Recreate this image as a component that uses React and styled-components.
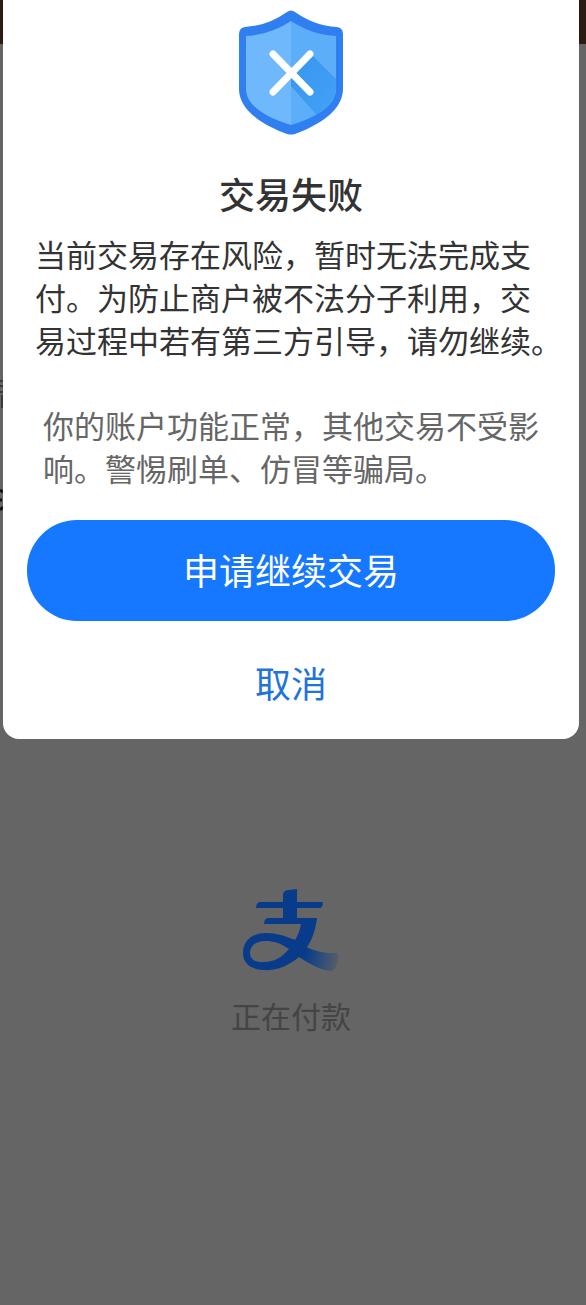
import React from "react";
import styled, { createGlobalStyle } from "styled-components";

const GlobalStyle = createGlobalStyle`
    * {
        box-sizing: border-box;
    }

    body {
        margin: 0;
        background: #656565;
        font-family: "Noto Sans CJK SC", sans-serif;
    }
`;

const ShieldIcon = () => (
    <Shield viewBox="0 0 104 126" aria-hidden="true">
        <defs>
            <linearGradient id="shieldShadow" x1="0" y1="0" x2="1" y2="1">
                <stop offset="0" stopColor="#3795ee" />
                <stop offset="1" stopColor="#46a5f8" />
            </linearGradient>
            <clipPath id="shieldInner">
                <path d="M52 11C66 20 80 25 97 26V80C96 97 75 108 52 115C29 108 8 97 7 80V26C24 25 38 20 52 11Z" />
            </clipPath>
        </defs>
        <path
            d="M48 2Q52 -1 56 2C69 11 82 16 98 17Q104 18 104 24V80C103 101 80 115 56 124Q52 125 48 124C24 115 1 101 0 80V24Q0 18 6 17C22 16 35 11 48 2Z"
            fill="#2f7ff0"
        />
        <g clipPath="url(#shieldInner)">
            <path d="M0 0H52V126H0Z" fill="#70b8fc" />
            <path d="M52 0H104V126H52Z" fill="#5caef8" />
            <path d="M74 46L104 76V126H96L52 76V64Z" fill="url(#shieldShadow)" />
        </g>
        <path
            d="M34 44L71 82M71 44L34 82"
            fill="none"
            stroke="#fff"
            strokeWidth="7"
            strokeLinecap="round"
        />
    </Shield>
);

const PayLogo = () => (
    <Logo viewBox="0 0 96 82" aria-hidden="true">
        <defs>
            <linearGradient id="logoTail" gradientUnits="userSpaceOnUse" x1="62" y1="66" x2="98" y2="72">
                <stop offset="0" stopColor="#083c8a" />
                <stop offset="1" stopColor="#083c8a" stopOpacity="0.1" />
            </linearGradient>
        </defs>
        <g fill="#083c8a">
            <path d="M16 13H80Q80 17 78 19H13Q13 15 16 13Z" />
            <path d="M24 29H74L72 35H21Q21 31 24 29Z" />
            <path d="M40 5Q41 1 46 1L54 0V35H40Z" />
            <path
                d="M58 29H74C72 45 67 57 56 68C45 77 33 82 20 81C7 80 0 74 0 64C0 52 9 44 23 44C34 44 42 47 52 51C55 46 57 41 58 35ZM46 60C37 54 31 52 22 52C13 52 7 57 7 64C7 70 12 74 21 73C32 73 39 68 46 60Z"
                fillRule="evenodd"
            />
        </g>
        <path
            d="M50 50C64 60 78 65 93 64Q97 65 95 73Q93 80 88 82C76 81 66 74 54 67Z"
            fill="url(#logoTail)"
        />
    </Logo>
);

// slivers of the page content that stick out left of the dialog
const PageEdge = () => (
    <Edge viewBox="0 0 3 132" aria-hidden="true">
        <path d="M0 2H3M0 7H3M0 13H3M2 16V29" stroke="#3a3a3a" strokeWidth="2" fill="none" />
        <path d="M0 111L3 113M0 121H2M0 131L3 128" stroke="#111" strokeWidth="3" fill="none" />
    </Edge>
);

const App = () => {
    return (
        <Screen>
            <GlobalStyle />
            <StatusStrip />
            <PageEdge />
            <Paying>
                <PayLogo />
                <p>正在付款</p>
            </Paying>

            <Dialog role="dialog" aria-labelledby="dialog-title">
                <ShieldIcon />
                <Title id="dialog-title">交易失败</Title>
                <Message>
                    当前交易存在风险，暂时无法完成支
                    <br />
                    付。为防止商户被不法分子利用，交
                    <br />
                    易过程中若有第三方引导，请勿继续。
                </Message>
                <Hint>
                    你的账户功能正常，其他交易不受影
                    <br />
                    响。警惕刷单、仿冒等骗局。
                </Hint>
                <PrimaryButton type="button">申请继续交易</PrimaryButton>
                <CancelButton type="button">取消</CancelButton>
            </Dialog>
        </Screen>
    );
};

export default App;

const Screen = styled.main`
    position: relative;
    min-height: 100vh;
    background: #656565;
`;

const StatusStrip = styled.div`
    height: 44px;
    background: #2c1b13;
`;

const Edge = styled.svg`
    display: block;
    width: 3px;
    height: 132px;
    margin-top: 335px;
`;

const Paying = styled.section`
    display: flex;
    flex-direction: column;
    align-items: center;
    padding-top: 378px;
    padding-right: 4px;

    p {
        margin: 22px 0 0;
        font-size: 30px;
        line-height: 44px;
        color: #444;
    }
`;

const Logo = styled.svg`
    width: 96px;
    height: 82px;
`;

const Dialog = styled.div`
    position: absolute;
    top: 0;
    left: 3px;
    right: 7px;
    display: flex;
    flex-direction: column;
    align-items: center;
    padding: 10px 24px 27px;
    border-radius: 0 0 16px 16px;
    background: #fff;
`;

const Shield = styled.svg`
    width: 104px;
    height: 126px;
`;

const Title = styled.h1`
    margin: 31px 0 0;
    font-size: 36px;
    font-weight: 500;
    line-height: 52px;
    color: #333;
`;

const Message = styled.p`
    align-self: stretch;
    margin: 13px 0 0;
    padding-left: 8px;
    font-size: 31px;
    line-height: 43px;
    color: #333;
    white-space: nowrap;
`;

const Hint = styled(Message)`
    margin-top: 42px;
    padding-left: 16px;
    color: #666;
`;

const PrimaryButton = styled.button`
    align-self: stretch;
    height: 101px;
    margin-top: 31px;
    padding: 0 0 4px;
    border: 0;
    border-radius: 50px;
    background: #1677ff;
    color: #fff;
    font-family: inherit;
    font-size: 36px;
    cursor: pointer;
`;

const CancelButton = styled.button`
    margin-top: 31px;
    padding: 0 24px;
    border: 0;
    background: none;
    color: #1f74d8;
    font-family: inherit;
    font-size: 36px;
    line-height: 60px;
    cursor: pointer;
`;
